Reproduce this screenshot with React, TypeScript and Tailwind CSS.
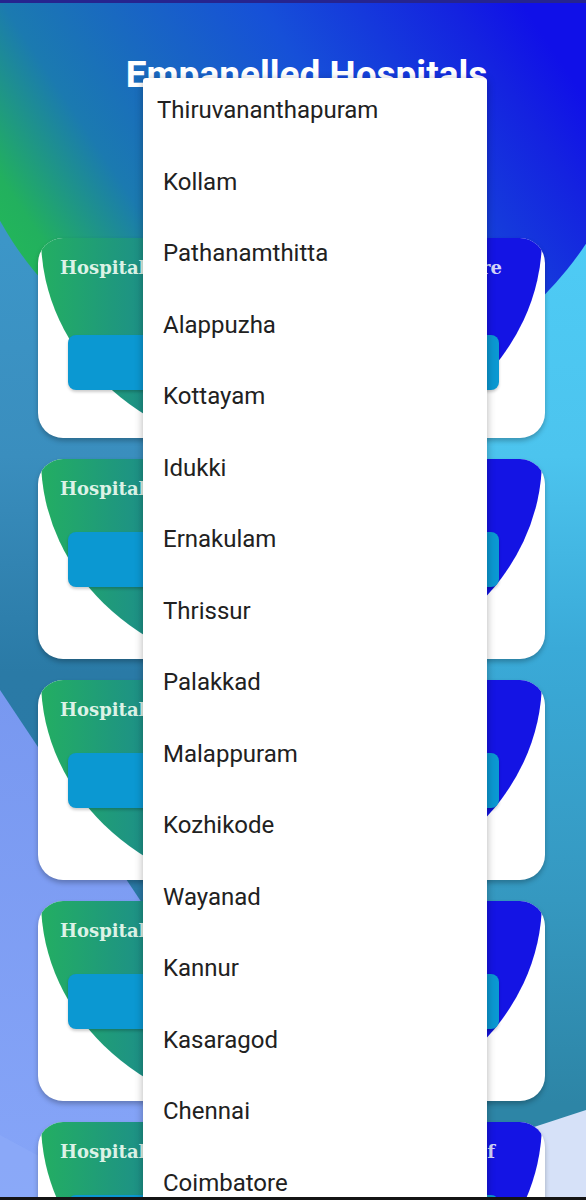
import React from "react";

const districts = [
  "Thiruvananthapuram",
  "Kollam",
  "Pathanamthitta",
  "Alappuzha",
  "Kottayam",
  "Idukki",
  "Ernakulam",
  "Thrissur",
  "Palakkad",
  "Malappuram",
  "Kozhikode",
  "Wayanad",
  "Kannur",
  "Kasaragod",
  "Chennai",
  "Coimbatore",
];

type CardProps = {
  side: "left" | "right";
  name: string;
  textCls: string;
  btnCls: string;
};

const rows: { left: CardProps; right: CardProps }[] = [
  {
    left: { side: "left", name: "Hospital Name", textCls: "pl-[22px]", btnCls: "mt-[55px]" },
    right: { side: "right", name: "Hospital Care", textCls: "pr-[43px]", btnCls: "mt-[55px]" },
  },
  {
    left: { side: "left", name: "Hospital Name", textCls: "pl-[22px]", btnCls: "mt-[31px]" },
    right: { side: "right", name: "Hospital", textCls: "pr-[70px]", btnCls: "mt-[31px]" },
  },
  {
    left: { side: "left", name: "Hospital Name", textCls: "pl-[22px]", btnCls: "mt-[31px]" },
    right: { side: "right", name: "Hospital", textCls: "pr-[70px]", btnCls: "mt-[31px]" },
  },
  {
    left: { side: "left", name: "Hospital Name", textCls: "pl-[22px]", btnCls: "mt-[31px]" },
    right: { side: "right", name: "Hospital", textCls: "pr-[70px]", btnCls: "mt-[31px]" },
  },
  {
    left: { side: "left", name: "Hospital Name", textCls: "pl-[22px]", btnCls: "mt-[31px]" },
    right: { side: "right", name: "Hospital of", textCls: "pr-[50px]", btnCls: "mt-[31px]" },
  },
];

function Card({ side, name, textCls, btnCls }: CardProps) {
  const left = side === "left";
  return (
    <div className="relative h-[200px] overflow-hidden rounded-[25px] bg-white shadow-[0_3px_5px_rgba(0,0,0,0.25)]">
      {left ? (
        <div className="absolute left-[3px] top-[-215px] h-[430px] w-[484px] rounded-[50%] bg-[linear-gradient(90deg,#23ae62_0%,#1d8f88_22%,#1660c8_100%)]" />
      ) : (
        <div className="absolute right-[3px] top-[-215px] h-[430px] w-[484px] rounded-[50%] bg-[#1414e4]" />
      )}
      <div className="relative flex flex-col">
        <div
          className={`flex whitespace-nowrap pt-[18px] font-['DejaVu_Serif',serif] text-[18px] font-bold leading-[24px] ${
            left ? "justify-start text-[#dcf2e6]" : "justify-end text-[#d4d6fa]"
          } ${textCls}`}
        >
          {name}
        </div>
        <div
          className={`h-[55px] w-[170px] rounded-[8px] bg-[#0b98d2] shadow-[0_2px_3px_rgba(0,0,0,0.2)] ${
            left ? "ml-[30px]" : "ml-auto mr-[46px]"
          } ${btnCls}`}
        />
      </div>
    </div>
  );
}

export default function App() {
  return (
    <div className="relative h-[1200px] w-[586px] overflow-hidden font-['Roboto',sans-serif]">
      <svg
        className="absolute inset-0"
        width="586"
        height="1200"
        viewBox="0 0 586 1200"
      >
        <defs>
          <linearGradient id="lcol" x1="0" y1="0" x2="0" y2="1200" gradientUnits="userSpaceOnUse">
            <stop offset="0.2" stopColor="#3c96c8" />
            <stop offset="0.38" stopColor="#3a8ebe" />
            <stop offset="0.56" stopColor="#2a7aa6" />
            <stop offset="1" stopColor="#2a78a4" />
          </linearGradient>
          <linearGradient id="rcol" x1="0" y1="0" x2="0" y2="1200" gradientUnits="userSpaceOnUse">
            <stop offset="0.2" stopColor="#4ecbf5" />
            <stop offset="0.38" stopColor="#4cc4ee" />
            <stop offset="0.54" stopColor="#3aaad8" />
            <stop offset="0.75" stopColor="#3598c0" />
            <stop offset="0.92" stopColor="#2d85a6" />
          </linearGradient>
          <linearGradient id="blob" x1="0" y1="260" x2="480" y2="-60" gradientUnits="userSpaceOnUse">
            <stop offset="0" stopColor="#23b858" />
            <stop offset="0.08" stopColor="#22b05e" />
            <stop offset="0.25" stopColor="#1b7ab0" />
            <stop offset="0.62" stopColor="#1650d8" />
            <stop offset="0.9" stopColor="#1422e0" />
            <stop offset="1" stopColor="#1010e8" />
          </linearGradient>
          <linearGradient id="peri" x1="0" y1="690" x2="0" y2="1200" gradientUnits="userSpaceOnUse">
            <stop offset="0" stopColor="#7898f0" />
            <stop offset="1" stopColor="#86a5f8" />
          </linearGradient>
        </defs>
        <rect x="0" y="0" width="293" height="1200" fill="url(#lcol)" />
        <rect x="293" y="0" width="293" height="1200" fill="url(#rcol)" />
        <polygon points="0,690 340,1200 0,1200" fill="url(#peri)" />
        <polygon points="0,1135 120,1200 0,1200" fill="#8dacf8" opacity="0.6" />
        <polygon points="586,1110 470,1148 470,1200 586,1200" fill="#d6e1f8" />
        <ellipse cx="300" cy="48" rx="345" ry="350" fill="url(#blob)" />
      </svg>

      <div className="relative h-[3px] bg-[#26248f]" />

      <div className="relative">
        <h1 className="mt-[53px] pl-[27px] text-center text-[37px] font-bold leading-[37px] text-white">
          Empanelled Hospitals
        </h1>
        <div className="mt-[145px] grid grid-cols-2 gap-x-[17px] gap-y-[21px] pl-[38px] pr-[41px]">
          {rows.map((r, i) => (
            <React.Fragment key={i}>
              <Card {...r.left} />
              <Card {...r.right} />
            </React.Fragment>
          ))}
        </div>
      </div>

      <div className="absolute left-[143px] top-[78px] h-[1130px] w-[344px] rounded-[3px] bg-white shadow-[0_2px_8px_rgba(0,0,0,0.3)]">
        <ul className="-mt-[3px]">
          {districts.map((d, i) => (
            <li
              key={d}
              className={`h-[71.5px] text-[24px] leading-[71.5px] text-[#212121] ${
                i === 0 ? "pl-[14px]" : "pl-[20px]"
              }`}
            >
              {d}
            </li>
          ))}
        </ul>
      </div>

      <div className="absolute bottom-0 left-0 h-[3px] w-full bg-[#141414]" />
    </div>
  );
}
